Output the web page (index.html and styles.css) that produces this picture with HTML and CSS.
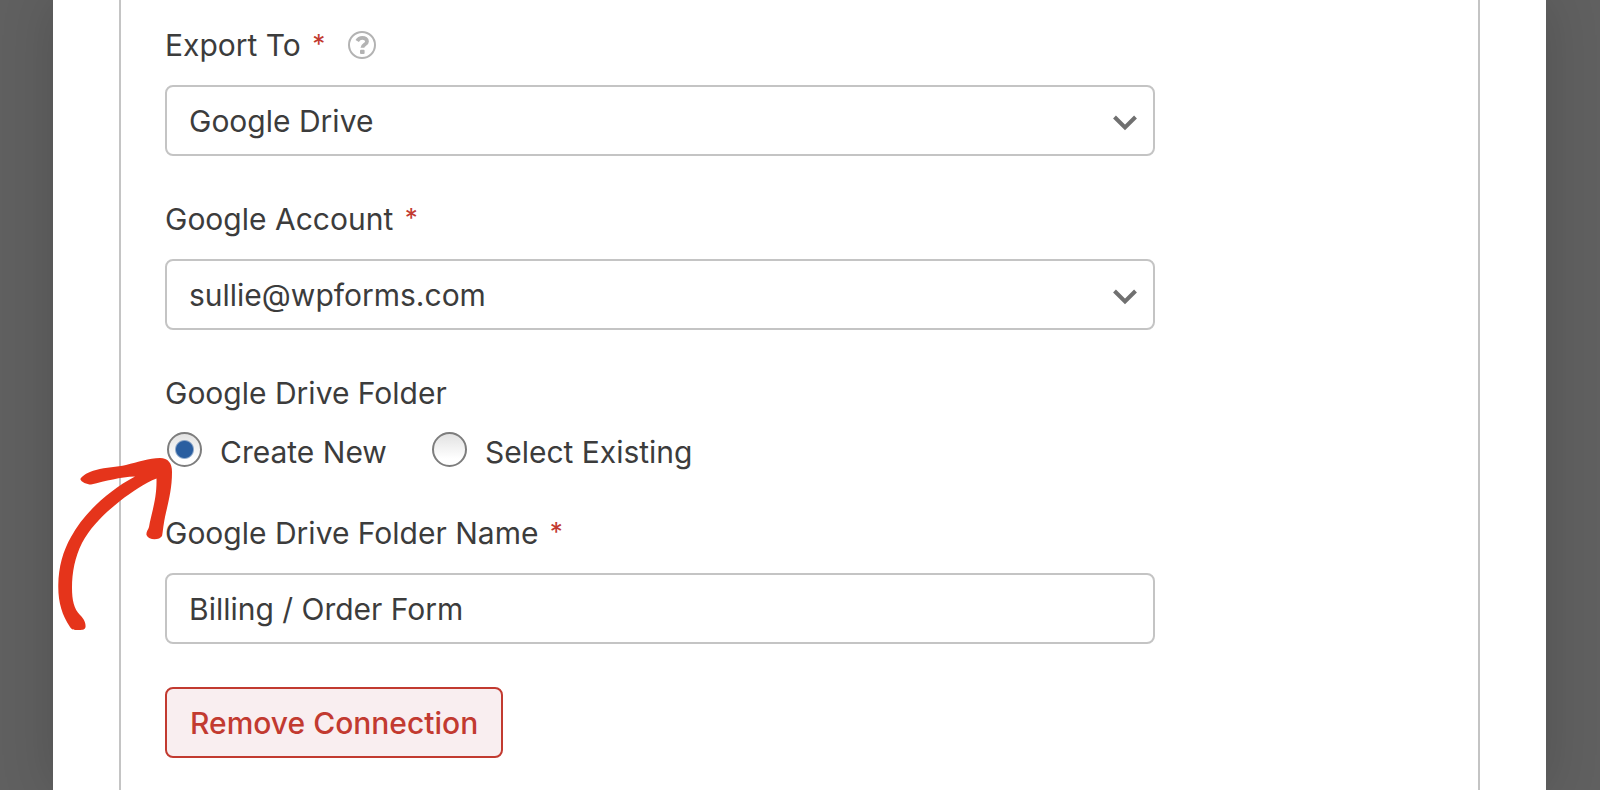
FILE: index.html
```
<!DOCTYPE html>
<html lang="en">
<head>
  <meta charset="UTF-8">
  <title>Entry Automation</title>
  <meta name="viewport" content="width=device-width, initial-scale=1.0">
  <link rel="stylesheet" href="styles.css">
</head>
<body>

  <div class="modal">
    <form class="connection">

      <!-- Export To -->
      <div class="field">
        <div class="field-label">
          <label for="exportTo">Export To <span class="required">*</span></label>
          <svg class="help" viewBox="0 0 28 28" aria-hidden="true">
            <circle cx="14" cy="14" r="13" fill="none" stroke="#b3b3b3" stroke-width="2"/>
            <path d="M9.200 10C10.400 7.800 12 6.800 14.300 6.800c2.700 0 4.700 1.400 4.700 3.600 0 3.200-4.600 3-4.600 6.400" fill="none" stroke="#b3b3b3" stroke-width="3.800"/>
            <rect x="12" y="18.800" width="4.600" height="4.200" rx="1" fill="#b3b3b3"/>
          </svg>
        </div>
        <div class="select-wrap">
          <select class="control" id="exportTo">
            <option>Google Drive</option>
          </select>
          <svg class="chevron" viewBox="0 0 24 16"><path d="M1.500 2 12 12.500 22.500 2"/></svg>
        </div>
      </div>

      <!-- Google Account -->
      <div class="field">
        <div class="field-label">
          <label for="account">Google Account <span class="required">*</span></label>
        </div>
        <div class="select-wrap">
          <select class="control" id="account">
            <option>sullie@wpforms.com</option>
          </select>
          <svg class="chevron" viewBox="0 0 24 16"><path d="M1.500 2 12 12.500 22.500 2"/></svg>
        </div>
      </div>

      <!-- Google Drive Folder -->
      <div class="field" role="radiogroup" aria-labelledby="folderLabel">
        <div class="field-label" id="folderLabel">Google Drive Folder</div>
        <div class="radios">
          <label class="radio"><input type="radio" name="folder" checked>Create New</label>
          <label class="radio"><input type="radio" name="folder">Select Existing</label>
          <svg class="arrow" viewBox="56 455 118 178" aria-hidden="true">
            <path d="M80.300 479C83 475 88 472 96 470C106 467 117 467 126 465C138 462 149 458 160 458C168 458 172 463 172 472C172 490 168 503 165 517C163 527 163 532 162 536C160 540 149 541 146.500 535C146 532 148 530 149 527C151 514 157 500 156.500 478.500C145 483 133 491 120 501C105 513 91 526 82 543C75 557 72 572 72 588C72 600 74 609 80 615C83 618 86 622 85.500 627C85 630 82 630 78 630C74 630 72 630 70 627C62 615 58 602 58.300 585C58.500 567 63 551 71 537C84 513 108 491 135 476.500C120 477 106 481 91 484.500C87 484.500 81 482 80.300 479Z"/>
          </svg>
        </div>
      </div>

      <!-- Folder Name -->
      <div class="field">
        <div class="field-label">
          <label for="folderName">Google Drive Folder Name <span class="required">*</span></label>
        </div>
        <input class="control" type="text" id="folderName" value="Billing / Order Form">
      </div>

      <button type="button" class="remove">Remove Connection</button>
    </form>
  </div>

</body>
</html>
```

FILE: styles.css
```
* {
  box-sizing: border-box;
}

body {
  background: #606060;
  color: #3c3c3c;
  font-family: Inter, "Liberation Sans", sans-serif;
  font-size: 30px;
  line-height: 40px;
  margin: 0;
}

.modal {
  background: #fff;
  margin: 0 54px 0 53px;
  padding: 0 66px;
  box-shadow: 0 0 50px rgba(0, 0, 0, 0.16);
}

.connection {
  min-height: 100vh;
  padding: 25px 44px 30px;
  border: solid #c4c4c4;
  border-width: 0 2px;
}

.field {
  width: 78%;
  margin-bottom: 43px;
}

.field-label {
  display: flex;
  align-items: center;
  gap: 23px;
  margin-bottom: 20px;
}

.required {
  color: #c23a30;
  font-size: 26px;
  line-height: 1;
  vertical-align: 3px;
  margin-left: 3px;
}

.help {
  width: 28px;
  height: 28px;
}

.select-wrap {
  position: relative;
}

.control {
  display: block;
  width: 100%;
  height: 71px;
  padding: 0 22px;
  background: #fff;
  color: inherit;
  font: inherit;
  border: 2px solid #c4c4c4;
  border-radius: 8px;
  appearance: none;
}

.chevron {
  position: absolute;
  top: 30px;
  right: 18px;
  width: 24px;
  height: 16px;
  fill: none;
  stroke: #707070;
  stroke-width: 4;
  pointer-events: none;
}

.radios {
  position: relative;
  display: flex;
  gap: 43px;
  height: 38px;
  margin-top: -1px;
}

.radio {
  display: flex;
  gap: 18px;
}

.radio input {
  appearance: none;
  width: 35px;
  height: 35px;
  margin: 0 0 0 2px;
  border: 2px solid #7d7d7d;
  border-radius: 50%;
  background: linear-gradient(#e2e2e2, #fff 80%);
}

.radio input:checked {
  background: radial-gradient(circle, #2a5ea0 8px, transparent 10px), linear-gradient(#e2e2e2, #fff 80%);
}

/* callout arrow pointing at the first radio */
.arrow {
  position: absolute;
  left: -109px;
  top: 23px;
  width: 118px;
  height: 178px;
  fill: #e5341b;
  pointer-events: none;
}

.remove {
  height: 71px;
  padding: 0 23px;
  background: #f9eef0;
  color: #c23a30;
  font: inherit;
  font-weight: 500;
  border: 2px solid #c23a30;
  border-radius: 8px;
}
```
